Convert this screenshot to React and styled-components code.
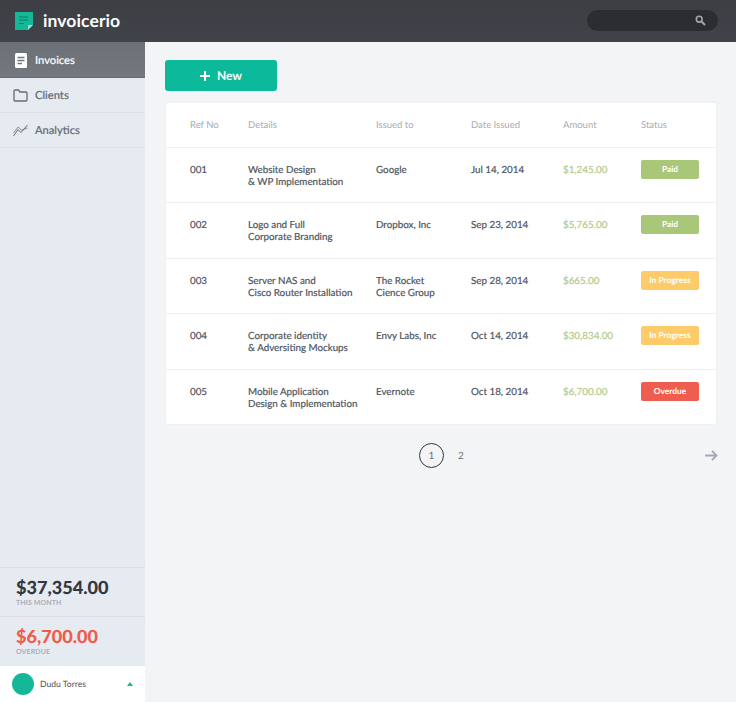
import React from 'react';
import styled, { createGlobalStyle } from 'styled-components';

const GlobalStyle = createGlobalStyle`
  html, body {
    margin: 0;
    padding: 0;
    height: 100%;
    overflow: hidden;
  }
  body {
    font-family: Lato, "Liberation Sans", sans-serif;
    text-rendering: geometricPrecision;
    background: #f3f4f6;
  }
  * {
    box-sizing: border-box;
  }
`;

const Page = styled.div`
  width: 736px;
  height: 702px;
  display: flex;
  flex-direction: column;
`;

const TopBar = styled.header`
  height: 42px;
  flex: none;
  display: flex;
  align-items: center;
  justify-content: space-between;
  padding: 0 18px 0 15px;
  background: linear-gradient(#3c3e43, #404349);
`;

const Brand = styled.div`
  display: flex;
  align-items: center;
  gap: 10px;
  margin-top: -1px;
  color: #fff;
  font-size: 17.5px;
  font-weight: 700;
  letter-spacing: 0.1px;
`;

const Search = styled.div`
  width: 131px;
  height: 21px;
  margin-top: -1px;
  display: flex;
  align-items: center;
  justify-content: flex-end;
  padding-right: 12px;
  border-radius: 11px;
  background: #2b2d31;
`;

const Body = styled.div`
  flex: 1;
  display: flex;
  min-height: 0;
`;

const Sidebar = styled.aside`
  width: 145px;
  flex: none;
  display: flex;
  flex-direction: column;
  background: #e6eaf1;
`;

const Nav = styled.nav`
  flex: 1;
  display: flex;
  flex-direction: column;
`;

const NavItem = styled.a`
  height: ${(p) => (p.$active ? 36 : 35)}px;
  display: flex;
  align-items: center;
  gap: ${(p) => (p.$active ? 8 : 7)}px;
  padding-left: ${(p) => (p.$active ? 15 : 13)}px;
  padding-top: ${(p) => (p.$active ? 1 : 0)}px;
  font-size: 11.2px;
  font-weight: 400;
  -webkit-text-stroke: 0.2px currentColor;
  color: ${(p) => (p.$active ? '#fff' : '#636973')};
  background: ${(p) => (p.$active ? 'linear-gradient(#6c7177, #73787f)' : 'transparent')};
  border-bottom: 1px solid ${(p) => (p.$active ? '#686d74' : '#dde1e8')};
`;

const Stat = styled.div`
  height: ${(p) => p.$height}px;
  padding: 9px 0 0 16px;
  border-top: 1px solid #d9dde5;
`;

const StatValue = styled.div`
  font-size: 18.1px;
  line-height: 21px;
  font-weight: 900;
  color: ${(p) => p.$color};
`;

const StatLabel = styled.div`
  margin-top: 1px;
  font-size: 7px;
  line-height: 9px;
  font-weight: 700;
  letter-spacing: 0.1px;
  color: #a9afba;
`;

const UserBar = styled.div`
  height: 36px;
  flex: none;
  display: flex;
  align-items: center;
  padding: 0 12px;
  background: #fff;
  font-size: 8.6px;
  color: #4d5159;
`;

const Avatar = styled.div`
  width: 22px;
  height: 22px;
  margin-right: 6px;
  border-radius: 50%;
  background: #14b899;
`;

const Caret = styled.div`
  margin-left: auto;
  margin-right: 0;
  border-left: 3.5px solid transparent;
  border-right: 3.5px solid transparent;
  border-bottom: 4px solid #14b899;
`;

const Main = styled.main`
  flex: 1;
  min-width: 0;
  padding: 18px 19px 0 20px;
`;

const NewButton = styled.button`
  width: 112px;
  height: 31px;
  display: flex;
  align-items: center;
  justify-content: center;
  gap: 7px;
  padding: 0;
  border: 0;
  border-radius: 3px;
  background: #0cb99a;
  color: #fff;
  font-family: inherit;
  font-size: 12px;
  font-weight: 700;
  text-rendering: geometricPrecision;
`;

const Card = styled.div`
  margin-top: 11px;
  background: #fff;
  border: 1px solid #eef0f3;
  border-radius: 3px;
`;

const Row = styled.div`
  display: grid;
  grid-template-columns: 58px 128px 95px 92px 78px 58px;
  height: ${(p) => p.$height}px;
  padding: 17px 0 0 24px;
  font-size: 9.8px;
  line-height: 11.5px;
  font-weight: 400;
  -webkit-text-stroke: 0.2px currentColor;
  color: #4f5560;
  border-top: ${(p) => (p.$first ? 0 : '1px solid #eef0f3')};
`;

const HeadCell = styled.div`
  font-size: 9.5px;
  -webkit-text-stroke: 0;
  color: #a8abb1;
`;

const Amount = styled.div`
  color: #b2cb8a;
`;

const Badge = styled.div`
  width: 58px;
  height: 19px;
  margin-top: -5px;
  display: flex;
  align-items: center;
  justify-content: center;
  border-radius: 2px;
  background: ${(p) => p.$color};
  color: #fff;
  font-size: 8.4px;
  font-weight: 700;
  -webkit-text-stroke: 0;
`;

const Pager = styled.div`
  position: relative;
  display: flex;
  align-items: center;
  gap: 14px;
  height: 25px;
  margin-top: 18px;
  padding-left: 254px;
  font-size: 10px;
  color: #6b6f76;
`;

const PageOne = styled.div`
  width: 25px;
  height: 25px;
  display: flex;
  align-items: center;
  justify-content: center;
  border: 1.5px solid #33363b;
  border-radius: 50%;
`;

const NextArrow = styled.svg`
  position: absolute;
  right: -1px;
  top: 7px;
`;

const Glyph = styled.svg`
  flex: none;
`;

const STATUS = {
  Paid: '#a9c779',
  'In Progress': '#fecb6a',
  Overdue: '#ef5d4f',
};

const ROWS = [
  { ref: '001', details: ['Website Design', '& WP Implementation'], to: ['Google'], date: 'Jul 14, 2014', amount: '$1,245.00', status: 'Paid', height: 55 },
  { ref: '002', details: ['Logo and Full', 'Corporate Branding'], to: ['Dropbox, Inc'], date: 'Sep 23, 2014', amount: '$5,765.00', status: 'Paid', height: 56 },
  { ref: '003', details: ['Server NAS and', 'Cisco Router Installation'], to: ['The Rocket', 'Cience Group'], date: 'Sep 28, 2014', amount: '$665.00', status: 'In Progress', height: 55 },
  { ref: '004', details: ['Corporate identity', '& Adversiting Mockups'], to: ['Envy Labs, Inc'], date: 'Oct 14, 2014', amount: '$30,834.00', status: 'In Progress', height: 56 },
  { ref: '005', details: ['Mobile Application', 'Design & Implementation'], to: ['Evernote'], date: 'Oct 18, 2014', amount: '$6,700.00', status: 'Overdue', height: 55 },
];

const Lines = ({ items }) => (
  <div>
    {items.map((line) => (
      <div key={line}>{line}</div>
    ))}
  </div>
);

export default function App() {
  return (
    <Page>
      <GlobalStyle />
      <TopBar>
        <Brand>
          <Glyph width="18" height="18" viewBox="0 0 18 18">
            <path d="M0 0h18v13l-5 5H0z" fill="#14b899" />
            <path d="M13 18v-5h5z" fill="#8fe0cf" />
            <path d="M4 5h9M4 8h9M4 11.5h5" stroke="#0b7d69" strokeWidth="1.2" />
          </Glyph>
          invoicerio
        </Brand>
        <Search>
          <Glyph width="11" height="11" viewBox="0 0 11 11" fill="none" stroke="#a3a5a9">
            <circle cx="4.2" cy="4.2" r="2.9" strokeWidth="1.6" />
            <path d="M6.5 6.5L10 10" strokeWidth="2" />
          </Glyph>
        </Search>
      </TopBar>
      <Body>
        <Sidebar>
          <Nav>
            <NavItem $active>
              <Glyph width="12" height="15" viewBox="0 0 12 15">
                <rect width="12" height="15" rx="1.5" fill="#fff" />
                <path d="M2.5 4.5h7M2.5 7.5h7M2.5 10.5h4.5" stroke="#6f747b" strokeWidth="1.3" />
              </Glyph>
              Invoices
            </NavItem>
            <NavItem>
              <Glyph width="15" height="13" viewBox="0 0 15 13" fill="none" stroke="#666b74" strokeWidth="1.3">
                <path d="M1 2.2Q1 1 2.2 1H5.5L7 3H13Q14 3 14 4V11Q14 12 13 12H2Q1 12 1 11Z" />
              </Glyph>
              Clients
            </NavItem>
            <NavItem>
              <Glyph width="15" height="13" viewBox="0 0 15 13" fill="none" stroke="#666b74" strokeWidth="1">
                <path d="M0.5 12L5 5.5L8 8.5L14.5 1" />
                <path d="M0.5 9L5 3L8.5 6L14.5 4" strokeWidth="0.7" />
              </Glyph>
              Analytics
            </NavItem>
          </Nav>
          <Stat $height={49}>
            <StatValue $color="#33373e">$37,354.00</StatValue>
            <StatLabel>THIS MONTH</StatLabel>
          </Stat>
          <Stat $height={50}>
            <StatValue $color="#ee5c4d">$6,700.00</StatValue>
            <StatLabel>OVERDUE</StatLabel>
          </Stat>
          <UserBar>
            <Avatar />
            Dudu Torres
            <Caret />
          </UserBar>
        </Sidebar>
        <Main>
          <NewButton>
            <Glyph width="10" height="10" viewBox="0 0 10 10">
              <path d="M5 0v10M0 5h10" stroke="#fff" strokeWidth="2" />
            </Glyph>
            New
          </NewButton>
          <Card>
            <Row $first $height={44}>
              <HeadCell>Ref No</HeadCell>
              <HeadCell>Details</HeadCell>
              <HeadCell>Issued to</HeadCell>
              <HeadCell>Date Issued</HeadCell>
              <HeadCell>Amount</HeadCell>
              <HeadCell>Status</HeadCell>
            </Row>
            {ROWS.map((row) => (
              <Row key={row.ref} $height={row.height}>
                <div>{row.ref}</div>
                <Lines items={row.details} />
                <Lines items={row.to} />
                <div>{row.date}</div>
                <Amount>{row.amount}</Amount>
                <Badge $color={STATUS[row.status]}>{row.status}</Badge>
              </Row>
            ))}
          </Card>
          <Pager>
            <PageOne>1</PageOne>
            <div>2</div>
            <NextArrow width="13" height="11" viewBox="0 0 14 12" fill="none" stroke="#a2a8b3" strokeWidth="2">
              <path d="M0 6h12M7.5 1l5 5-5 5" />
            </NextArrow>
          </Pager>
        </Main>
      </Body>
    </Page>
  );
}
